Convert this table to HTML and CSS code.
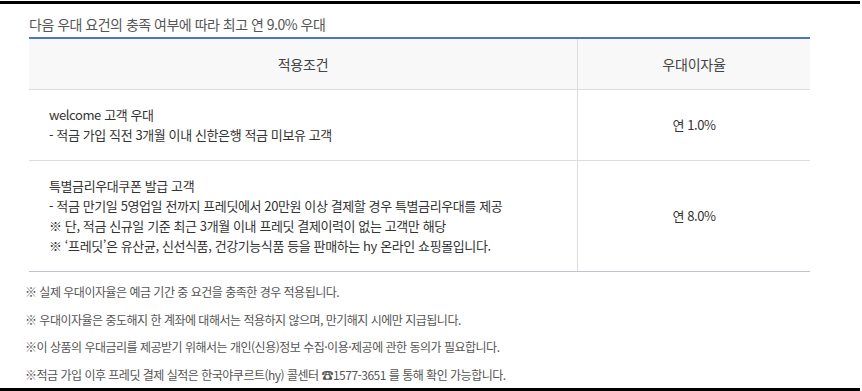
FILE: index.html
```html
<!DOCTYPE html>
<html lang="ko">
<head>
<meta charset="utf-8">
<link rel="stylesheet" href="styles.css">
</head>
<body>
<div class="frame">
  <p class="title">다음 우대 요건의 충족 여부에 따라 최고 연 9.0% 우대</p>
  <table class="rate">
    <thead>
      <tr><th class="c1">적용조건</th><th class="c2">우대이자율</th></tr>
    </thead>
    <tbody>
      <tr>
        <td class="cond">welcome 고객 우대<br>- 적금 가입 직전 3개월 이내 신한은행 적금 미보유 고객</td>
        <td class="val">연 1.0%</td>
      </tr>
      <tr class="last">
        <td class="cond">특별금리우대쿠폰 발급 고객<br>- 적금 만기일 5영업일 전까지 프레딧에서 20만원 이상 결제할 경우 특별금리우대를 제공<br>※ 단, 적금 신규일 기준 최근 3개월 이내 프레딧 결제이력이 없는 고객만 해당<br>※ ‘프레딧’은 유산균, 신선식품, 건강기능식품 등을 판매하는 hy 온라인 쇼핑몰입니다.</td>
        <td class="val">연 8.0%</td>
      </tr>
    </tbody>
  </table>
  <ul class="notes">
    <li>※ 실제 우대이자율은 예금 기간 중 요건을 충족한 경우 적용됩니다.</li>
    <li>※ 우대이자율은 중도해지 한 계좌에 대해서는 적용하지 않으며, 만기해지 시에만 지급됩니다.</li>
    <li>※이 상품의 우대금리를 제공받기 위해서는 개인(신용)정보 수집·이용·제공에 관한 동의가 필요합니다.</li>
    <li>※적금 가입 이후 프레딧 결제 실적은 한국야쿠르트(hy) 콜센터 ☎1577-3651 를 통해 확인 가능합니다.</li>
  </ul>
</div>
</body>
</html>
```
FILE: styles.css
```css
html, body {
  margin: 0;
  padding: 0;
  background: #fff;
}
body {
  font-family: "Noto Sans CJK KR", "Noto Sans", sans-serif;
  color: #333;
  width: 862px;
  height: 391px;
  overflow: hidden;
}
.frame {
  box-sizing: border-box;
  height: 391px;
  margin: 1px 2px 0 0;
  border-top: 3px solid #000;
  border-bottom: 4px solid #000;
  padding: 0 50px 0 29px;
}
.title {
  margin: 0;
  padding-top: 10px;
  height: 23px;
  font-size: 14px;
  line-height: 20px;
  letter-spacing: -0.5px;
  color: #555;
}
.rate {
  width: 100%;
  border-collapse: collapse;
  border-top: 2px solid #4a76c8;
  font-size: 13px;
  line-height: 20px;
  letter-spacing: -0.4px;
}
.rate th {
  height: 50px;
  padding: 0;
  background: #f8f8f8;
  font-weight: normal;
  font-size: 14px;
  letter-spacing: -0.2px;
  color: #444;
  border-bottom: 1px solid #ddd;
}
.rate th.c1 { width: 548px; }
.rate th.c2 { border-left: 1px solid #ddd; }
.rate td {
  padding: 15px 20px;
  border-bottom: 1px solid #ddd;
  vertical-align: middle;
}
.rate td.val {
  text-align: center;
  border-left: 1px solid #ddd;
}
.rate tr.last td { border-bottom-color: #c2c2cc; }
.notes {
  list-style: none;
  margin: 0 0 0 -4px;
  padding: 6px 0 0 0;
  font-size: 12px;
  line-height: 27.7px;
  letter-spacing: -0.5px;
  color: #555;
}
```
